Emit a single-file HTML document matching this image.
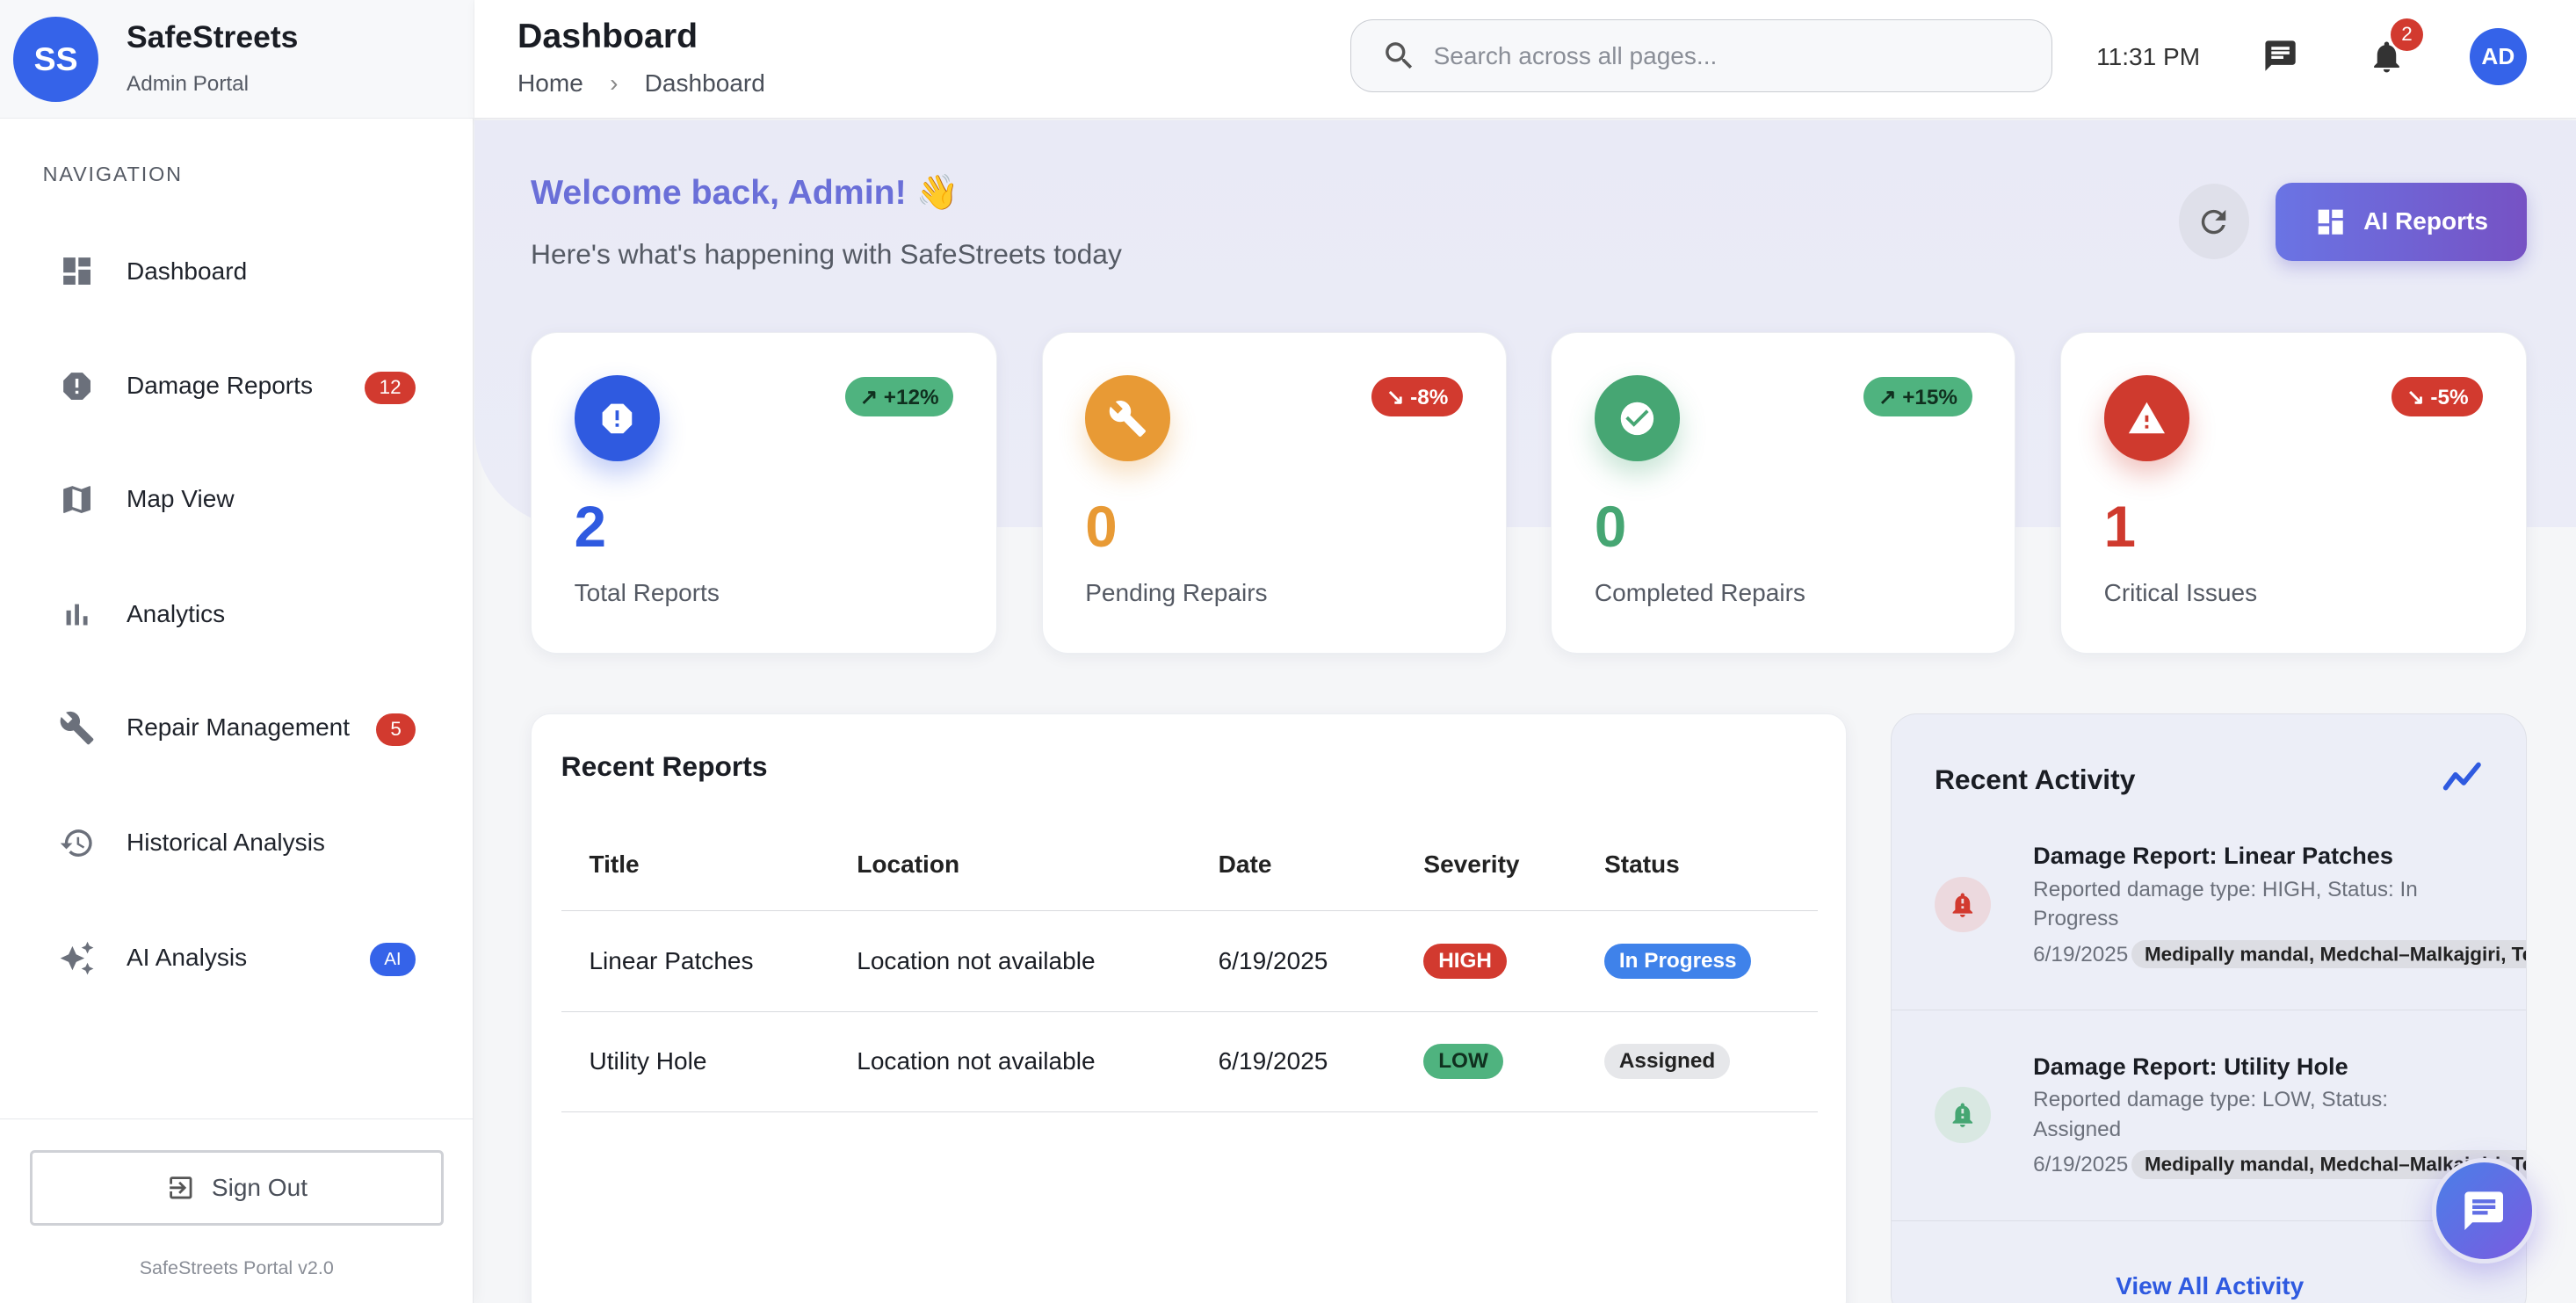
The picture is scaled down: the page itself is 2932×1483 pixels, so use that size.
<!DOCTYPE html>
<html><head><meta charset="utf-8">
<style>
*{box-sizing:border-box;margin:0;padding:0}
html{zoom:1.87;overflow:hidden;height:793px}
body{width:1568px;height:793px;overflow:hidden;font-family:"Liberation Sans",sans-serif;background:#f5f6f8;position:relative;color:#1a1d24}
.abs{position:absolute}
.side{left:0;top:0;width:288px;height:793px;background:#fff;border-right:1px solid #e6e7eb;box-shadow:2px 0 8px rgba(0,0,0,.04)}
.sh{left:0;top:0;width:288px;height:72px;background:#f7f8fa;border-bottom:1px solid #ebecef}
.nav{left:36px;display:flex;align-items:center;font-size:15px;color:#1f232b}
.nav svg{width:22px;height:22px;margin-right:19px;fill:#6b707b}
.badge{position:absolute;height:20px;border-radius:10px;color:#fff;font-size:12px;display:flex;align-items:center;justify-content:center}
.card{background:#fff;border-radius:16px;box-shadow:0 2px 10px rgba(20,30,60,.06);border:1px solid #eceef2}
.ic{position:absolute;left:26px;top:26px;width:52px;height:52px;border-radius:50%;display:flex;align-items:center;justify-content:center}
.pill{position:absolute;right:26px;top:27px;height:24px;border-radius:12px;color:#fff;font-size:13px;font-weight:bold;padding:0 9px;display:flex;align-items:center;gap:4px}
.num{position:absolute;left:26px;top:98px;font-size:35px;font-weight:bold}
.lbl{position:absolute;left:26px;top:150px;font-size:15px;color:#555a64}
td,th{font-size:15px;text-align:left;font-weight:normal;padding-left:17px}
th{font-weight:bold;color:#222}
.tag{display:inline-block;padding:3px 9px;border-radius:12px;font-size:13px}
</style></head><body>
<div class="abs side"></div>
<div class="abs sh"></div>
<div class="abs" style="left:8px;top:10px;width:52px;height:52px;border-radius:50%;background:#3563e9;color:#fff;font-size:20px;font-weight:bold;display:flex;align-items:center;justify-content:center">SS</div>
<div class="abs" style="left:77px;top:12px;font-size:19px;font-weight:bold">SafeStreets</div>
<div class="abs" style="left:77px;top:44px;font-size:13px;color:#555a64">Admin Portal</div>
<div class="abs" style="left:26px;top:99px;font-size:12.5px;letter-spacing:1px;color:#555a64">NAVIGATION</div>

<div class="abs nav" style="top:154px"><svg viewBox="0 0 24 24"><path d="M3 13h8V3H3v10zm0 8h8v-6H3v6zm10 0h8V11h-8v10zm0-18v6h8V3h-8z"/></svg>Dashboard</div>
<div class="abs nav" style="top:224px"><svg viewBox="0 0 24 24"><path d="M15.73 3H8.27L3 8.27v7.46L8.27 21h7.46L21 15.73V8.27L15.73 3zM13 17h-2v-2h2v2zm0-4h-2V7h2v6z"/></svg>Damage Reports</div>
<div class="abs badge" style="left:222px;top:226px;width:31px;background:#d23a2f">12</div>
<div class="abs nav" style="top:293px"><svg viewBox="0 0 24 24"><path d="M20.5 3l-.16.03L15 5.1 9 3 3.36 4.9c-.21.07-.36.25-.36.48V20.5c0 .28.22.5.5.5l.16-.03L9 18.9l6 2.1 5.64-1.9c.21-.07.36-.25.36-.48V3.5c0-.28-.22-.5-.5-.5zM15 19l-6-2.11V5l6 2.11V19z"/></svg>Map View</div>
<div class="abs nav" style="top:363px"><svg viewBox="0 0 24 24"><path d="M5 9.2h3V19H5zM10.6 5h2.8v14h-2.8zm5.6 8H19v6h-2.8z"/></svg>Analytics</div>
<div class="abs nav" style="top:432px"><svg viewBox="0 0 24 24"><path d="M22.7 19l-9.1-9.1c.9-2.3.4-5-1.5-6.9-2-2-5-2.4-7.4-1.3L9 6 6 9 1.6 4.7C.4 7.1.9 10.1 2.9 12.1c1.9 1.9 4.6 2.4 6.9 1.5l9.1 9.1c.4.4 1 .4 1.4 0l2.3-2.3c.5-.4.5-1.1.1-1.4z"/></svg>Repair Management</div>
<div class="abs badge" style="left:229px;top:434px;width:24px;background:#d23a2f">5</div>
<div class="abs nav" style="top:502px"><svg viewBox="0 0 24 24"><path d="M13 3a9 9 0 0 0-9 9H1l3.89 3.89.07.14L9 12H6c0-3.87 3.130-7 7-7s7 3.13 7 7-3.13 7-7 7c-1.930 0-3.68-.79-4.94-2.06l-1.42 1.42A8.954 8.954 0 0 0 13 21a9 9 0 0 0 0-18zm-1 5v5l4.28 2.54.72-1.21-3.5-2.08V8H12z"/></svg>Historical Analysis</div>
<div class="abs nav" style="top:572px"><svg viewBox="0 0 24 24"><path d="M19 9l1.25-2.75L23 5l-2.75-1.25L19 1l-1.25 2.75L15 5l2.75 1.25L19 9zm-7.5.5L9 4 6.5 9.5 1 12l5.5 2.5L9 20l2.5-5.5L17 12l-5.5-2.5zM19 15l-1.25 2.75L15 19l2.75 1.25L19 23l1.25-2.75L23 19l-2.75-1.25L19 15z"/></svg>AI Analysis</div>
<div class="abs badge" style="left:225px;top:574px;width:28px;background:#3563e9;font-size:11px">AI</div>

<div class="abs" style="left:0;top:681px;width:288px;border-top:1px solid #e6e7eb"></div>
<div class="abs" style="left:18px;top:700px;width:252px;height:46px;border:2px solid #cfd1d6;border-radius:3px;display:flex;align-items:center;justify-content:center;font-size:15px;color:#4a4f59;gap:10px">
<svg width="18" height="18" viewBox="0 0 24 24" fill="#555"><path d="M10.09 15.59L11.5 17l5-5-5-5-1.41 1.41L12.67 11H3v2h9.67l-2.58 2.59zM19 3H5a2 2 0 0 0-2 2v4h2V5h14v14H5v-4H3v4a2 2 0 0 0 2 2h14c1.1 0 2-.9 2-2V5c0-1.1-.9-2-2-2z"/></svg>Sign Out</div>
<div class="abs" style="left:0;top:765px;width:288px;text-align:center;font-size:11.5px;color:#8a8e97">SafeStreets Portal v2.0</div>

<!-- header -->
<div class="abs" style="left:289px;top:0;width:1279px;height:72px;background:#fff;border-bottom:1px solid #e6e7eb;box-shadow:0 1px 6px rgba(0,0,0,.04)"></div>
<div class="abs" style="left:315px;top:10px;font-size:21px;font-weight:bold">Dashboard</div>
<div class="abs" style="left:315px;top:42px;font-size:15px;color:#4a4f59">Home <span style="margin:0 12px;color:#888">›</span> Dashboard</div>
<div class="abs" style="left:822px;top:12px;width:427px;height:44px;border:1px solid #c9ccd2;border-radius:14px;background:#f7f8fa;display:flex;align-items:center;padding-left:18px;font-size:15px;color:#8a8e97;gap:10px">
<svg width="22" height="22" viewBox="0 0 24 24" fill="#555"><path d="M15.5 14h-.79l-.28-.27A6.47 6.47 0 0 0 16 9.5 6.5 6.5 0 1 0 9.5 16c1.61 0 3.09-.59 4.23-1.57l.27.28v.79l5 4.99L20.49 19l-4.99-5zm-6 0C7.01 14 5 11.99 5 9.5S7.01 5 9.5 5 14 7.01 14 9.5 11.99 14 9.5 14z"/></svg>Search across all pages...</div>
<div class="abs" style="left:1276px;top:26px;font-size:15px;color:#333">11:31 PM</div>
<svg class="abs" style="left:1377px;top:23px" width="22" height="22" viewBox="0 0 24 24" fill="#333"><path d="M20 2H4c-1.1 0-2 .9-2 2v18l4-4h14c1.1 0 2-.9 2-2V4c0-1.1-.9-2-2-2zM6 9h12v2H6V9zm8 5H6v-2h8v2zm4-6H6V6h12v2z"/></svg>
<svg class="abs" style="left:1441px;top:23px" width="23" height="23" viewBox="0 0 24 24" fill="#333"><path d="M12 22c1.1 0 2-.9 2-2h-4c0 1.1.89 2 2 2zm6-6v-5c0-3.07-1.64-5.640-4.5-6.32V4c0-.83-.67-1.5-1.5-1.5s-1.5.67-1.5 1.5v.68C7.63 5.36 6 7.92 6 11v5l-2 2v1h16v-1l-2-2z"/></svg>
<div class="abs badge" style="left:1455px;top:11px;width:20px;background:#d23a2f">2</div>
<div class="abs" style="left:1503px;top:17px;width:35px;height:35px;border-radius:50%;background:#3563e9;color:#fff;font-size:14px;font-weight:bold;display:flex;align-items:center;justify-content:center">AD</div>

<!-- hero -->
<div class="abs" style="left:289px;top:73px;width:1279px;height:248px;background:linear-gradient(180deg,#e9eaf6,#ebecf7);border-bottom-left-radius:60px"></div>
<div class="abs" style="left:323px;top:105px;font-size:21px;font-weight:bold;color:#6a6fd8">Welcome back, Admin! 👋</div>
<div class="abs" style="left:323px;top:145px;font-size:17px;color:#555a64">Here's what's happening with SafeStreets today</div>
<div class="abs" style="left:1326px;top:112px;width:43px;height:46px;border-radius:50%;background:#dfe0ea;display:flex;align-items:center;justify-content:center">
<svg width="22" height="22" viewBox="0 0 24 24" fill="#555"><path d="M17.65 6.35A7.958 7.958 0 0 0 12 4a8 8 0 1 0 7.73 10h-2.08A5.99 5.99 0 0 1 12 18c-3.31 0-6-2.69-6-6s2.69-6 6-6c1.66 0 3.14.69 4.22 1.78L13 11h7V4l-2.35 2.35z"/></svg></div>
<div class="abs" style="left:1385px;top:111px;width:153px;height:48px;border-radius:10px;background:linear-gradient(90deg,#6a74e4,#7652c4);color:#fff;font-size:15px;font-weight:bold;display:flex;align-items:center;justify-content:center;gap:10px;box-shadow:0 4px 10px rgba(100,90,200,.3)">
<svg width="20" height="20" viewBox="0 0 24 24" fill="#fff"><path d="M3 13h8V3H3v10zm0 8h8v-6H3v6zm10 0h8V11h-8v10zm0-18v6h8V3h-8z"/></svg>AI Reports</div>

<!-- stat cards -->
<div class="abs card" style="left:323px;top:202px;width:284px;height:196px">
<div class="ic" style="background:#2f5ae0;box-shadow:0 8px 16px rgba(50,90,230,.3)"><svg width="24" height="24" viewBox="0 0 24 24" fill="#fff"><path d="M15.73 3H8.27L3 8.27v7.46L8.27 21h7.46L21 15.73V8.27L15.73 3zM13 17h-2v-2h2v2zm0-4h-2V7h2v6z"/></svg></div>
<div class="pill" style="background:#4fb37f;color:#10301f">↗ +12%</div>
<div class="num" style="color:#2f5ae0">2</div><div class="lbl">Total Reports</div></div>
<div class="abs card" style="left:634px;top:202px;width:283px;height:196px">
<div class="ic" style="background:#e89a35;box-shadow:0 8px 16px rgba(230,150,50,.3)"><svg width="24" height="24" viewBox="0 0 24 24" fill="#fff"><path d="M22.7 19l-9.1-9.1c.9-2.3.4-5-1.5-6.9-2-2-5-2.4-7.4-1.3L9 6 6 9 1.6 4.7C.4 7.1.9 10.1 2.9 12.1c1.9 1.9 4.6 2.4 6.9 1.5l9.1 9.1c.4.4 1 .4 1.4 0l2.3-2.3c.5-.4.5-1.1.1-1.4z"/></svg></div>
<div class="pill" style="background:#d23a2f">↘ -8%</div>
<div class="num" style="color:#e89a35">0</div><div class="lbl">Pending Repairs</div></div>
<div class="abs card" style="left:944px;top:202px;width:283px;height:196px">
<div class="ic" style="background:#46a673;box-shadow:0 8px 16px rgba(70,166,115,.3)"><svg width="24" height="24" viewBox="0 0 24 24" fill="#fff"><path d="M12 2a10 10 0 1 0 0 20 10 10 0 0 0 0-20zm-2 15l-5-5 1.41-1.41L10 14.17l7.59-7.59L19 8l-9 9z"/></svg></div>
<div class="pill" style="background:#4fb37f;color:#10301f">↗ +15%</div>
<div class="num" style="color:#46a673">0</div><div class="lbl">Completed Repairs</div></div>
<div class="abs card" style="left:1254px;top:202px;width:284px;height:196px">
<div class="ic" style="background:#cf3a2e;box-shadow:0 8px 16px rgba(210,58,47,.3)"><svg width="24" height="24" viewBox="0 0 24 24" fill="#fff"><path d="M1 21h22L12 2 1 21zm12-3h-2v-2h2v2zm0-4h-2v-4h2v4z"/></svg></div>
<div class="pill" style="background:#d23a2f">↘ -5%</div>
<div class="num" style="color:#cf3a2e">1</div><div class="lbl">Critical Issues</div></div>

<!-- recent reports -->
<div class="abs card" style="left:323px;top:434px;width:801px;height:370px;border-radius:12px">
<div class="abs" style="left:18px;top:22px;font-size:17px;font-weight:bold">Recent Reports</div>
<table class="abs" style="left:18px;top:64px;width:765px;border-collapse:collapse">
<tr style="height:56px;border-bottom:1px solid #d8dade"><th style="width:163px">Title</th><th style="width:220px">Location</th><th style="width:125px">Date</th><th style="width:110px">Severity</th><th>Status</th></tr>
<tr style="height:61px;border-bottom:1px solid #d8dade"><td>Linear Patches</td><td>Location not available</td><td>6/19/2025</td><td><span class="tag" style="background:#d23a2f;color:#fff;font-weight:bold">HIGH</span></td><td><span class="tag" style="background:#3f82ea;color:#fff;font-weight:bold">In Progress</span></td></tr>
<tr style="height:61px;border-bottom:1px solid #d8dade"><td>Utility Hole</td><td>Location not available</td><td>6/19/2025</td><td><span class="tag" style="background:#4fb37f;color:#10301f;font-weight:bold">LOW</span></td><td><span class="tag" style="background:#e6e7ea;color:#222;font-weight:bold">Assigned</span></td></tr>
</table></div>

<!-- recent activity -->
<div class="abs" style="left:1151px;top:434px;width:387px;height:370px;border-radius:16px;background:#eceef7;border:1px solid #dfe1e8;overflow:hidden">
<div class="abs" style="left:26px;top:30px;font-size:17px;font-weight:bold">Recent Activity</div>
<svg class="abs" style="left:334px;top:27px" width="26" height="22" viewBox="0 0 26 22"><path d="M3 18l6-8 5 5 9-11" stroke="#2f5ae0" stroke-width="3" fill="none" stroke-linecap="round" stroke-linejoin="round"/></svg>
<div class="abs" style="left:26px;top:99px;width:34px;height:34px;border-radius:50%;background:#ecd9de;display:flex;align-items:center;justify-content:center"><svg width="18" height="18" viewBox="0 0 24 24" fill="#d23a2f"><path d="M12 22c1.1 0 2-.9 2-2h-4c0 1.1.9 2 2 2zm6-6v-5c0-3.1-1.6-5.6-4.5-6.3V4a1.5 1.5 0 0 0-3 0v.7C7.6 5.4 6 7.9 6 11v5l-2 2v1h16v-1l-2-2zm-5-1h-2v-2h2v2zm0-4h-2V7h2v4z"/></svg></div>
<div class="abs" style="left:86px;top:78px;font-size:14.5px;font-weight:bold">Damage Report: Linear Patches</div>
<div class="abs" style="left:86px;top:98px;width:260px;font-size:13px;color:#6b707b;line-height:18px">Reported damage type: HIGH, Status: In Progress</div>
<div class="abs" style="left:86px;top:139px;font-size:13px;color:#6b707b;white-space:nowrap">6/19/2025<span style="background:#dcdde3;color:#222;font-size:12px;font-weight:bold;padding:2px 8px;border-radius:10px;margin-left:2px">Medipally mandal, Medchal–Malkajgiri, Telangana</span></div>
<div class="abs" style="left:0;top:180px;width:387px;border-top:1px solid #dcdee6"></div>
<div class="abs" style="left:26px;top:227px;width:34px;height:34px;border-radius:50%;background:#d9e8e2;display:flex;align-items:center;justify-content:center"><svg width="18" height="18" viewBox="0 0 24 24" fill="#46a673"><path d="M12 22c1.1 0 2-.9 2-2h-4c0 1.1.9 2 2 2zm6-6v-5c0-3.1-1.6-5.6-4.5-6.3V4a1.5 1.5 0 0 0-3 0v.7C7.6 5.4 6 7.9 6 11v5l-2 2v1h16v-1l-2-2zm-5-1h-2v-2h2v2zm0-4h-2V7h2v4z"/></svg></div>
<div class="abs" style="left:86px;top:206px;font-size:14.5px;font-weight:bold">Damage Report: Utility Hole</div>
<div class="abs" style="left:86px;top:226px;width:240px;font-size:13px;color:#6b707b;line-height:18px">Reported damage type: LOW, Status: Assigned</div>
<div class="abs" style="left:86px;top:267px;font-size:13px;color:#6b707b;white-space:nowrap">6/19/2025<span style="background:#dcdde3;color:#222;font-size:12px;font-weight:bold;padding:2px 8px;border-radius:10px;margin-left:2px">Medipally mandal, Medchal–Malkajgiri, Telangana</span></div>
<div class="abs" style="left:0;top:308px;width:387px;border-top:1px solid #dcdee6"></div>
<div class="abs" style="left:0;top:340px;width:387px;text-align:center;font-size:15px;font-weight:bold;color:#2f5ae0">View All Activity</div>
</div>

<div class="abs" style="left:1480px;top:705px;width:64px;height:64px;border-radius:50%;background:linear-gradient(135deg,#4a7fe8,#7a5be0);border:3px solid #e4e4f4;box-shadow:0 6px 18px rgba(110,90,220,.35);display:flex;align-items:center;justify-content:center">
<svg width="28" height="28" viewBox="0 0 24 24" fill="#fff"><path d="M20 2H4c-1.1 0-2 .9-2 2v18l4-4h14c1.1 0 2-.9 2-2V4c0-1.1-.9-2-2-2zM6 9h12v2H6V9zm8 5H6v-2h8v2zm4-6H6V6h12v2z"/></svg></div>
</body></html>
